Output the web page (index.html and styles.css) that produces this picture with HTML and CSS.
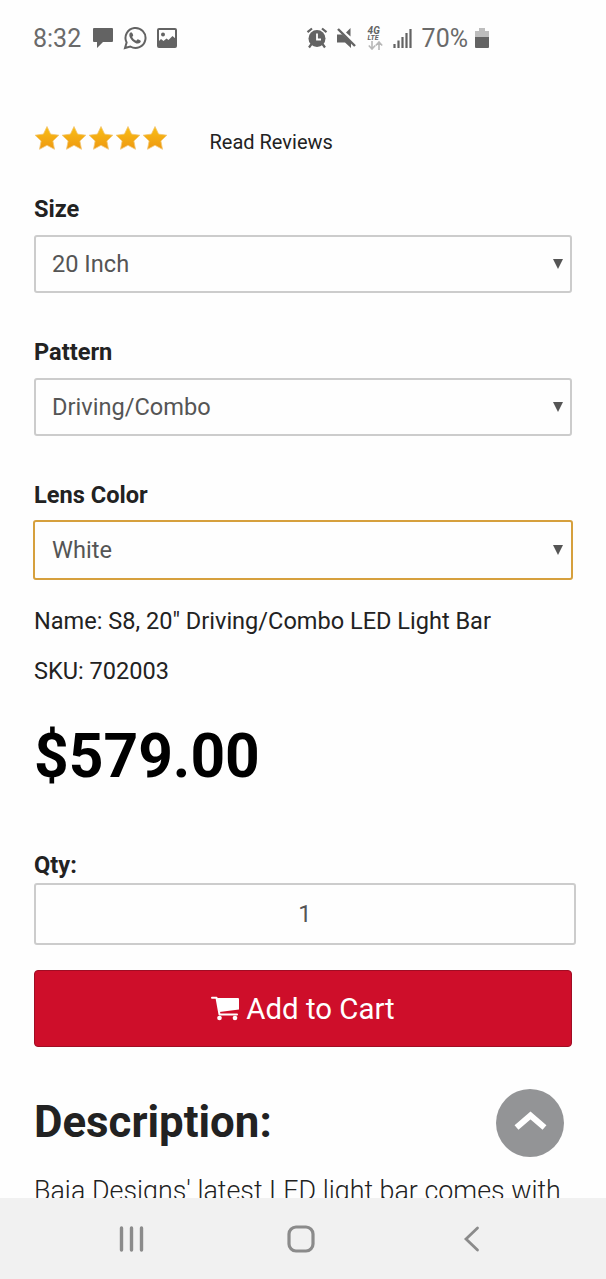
FILE: index.html
```html
<!DOCTYPE html>
<html lang="en">
<head>
    <meta charset="UTF-8">
    <meta name="viewport" content="width=device-width, initial-scale=1.0">
    <title>S8 LED Light Bar</title>
    <link rel="stylesheet" href="styles.css">
</head>
<body>

<header class="status-bar">
    <div class="status-group">
        <span class="status-text clock">8:32</span>
        <svg class="icon-message" width="22" height="22" viewBox="0 0 22 22"><path d="M2 1h18q1 0 1 1v12q0 1-1 1h-9l-6 6v-6H2q-1 0-1-1V2q0-1 1-1z" fill="#636363"/></svg>
        <svg class="icon-whatsapp" width="24" height="24" viewBox="0 0 24 24"><path d="M2 22l1.600-5.500A10 10 0 1 1 7.300 20.500z" fill="none" stroke="#636363" stroke-width="2"/><path d="M8.200 6.300c-.8 0-1.900 1.100-1.900 2.700 0 3.600 5 8.600 8.600 8.600 1.700 0 2.900-1.200 2.900-2.500 0-.5-2.500-1.800-3-1.800-.6 0-1.200 1.500-1.700 1.400-1.500-.4-3.400-2.200-3.900-3.600-.1-.5 1.100-1.100 1-1.800-.1-.6-1-3-2-3z" fill="#636363"/></svg>
        <svg class="icon-image" width="20" height="20" viewBox="0 0 20 20"><rect x="1" y="1" width="18" height="18" rx="1" fill="none" stroke="#636363" stroke-width="2"/><circle cx="6" cy="6.500" r="2" fill="#636363"/><path d="M1 14l3-3 2.500 2 3-2.500 2 1.500 4-4L19 11v8H1z" fill="#636363"/></svg>
    </div>
    <div class="status-group status-right">
        <svg width="22" height="22" viewBox="0 0 22 22"><circle cx="11" cy="11.500" r="8.500" fill="#636363"/><path d="M1.500 5.200L6 1.500M20.500 5.200L16 1.500M5.500 17L3 20.500M16.500 17L19 20.500" stroke="#636363" stroke-width="2.200" fill="none"/><path d="M11 6.500v6h4" stroke="#fff" stroke-width="1.800" fill="none"/></svg>
        <svg class="icon-mute" width="20" height="22" viewBox="0 0 20 22"><path d="M1 7.500h5L15 15v6l-6-5.500H1zM10 5.500L14.500 1v8.500z" fill="#636363"/><path d="M4.500 2.500l15 15" stroke="#fefefe" stroke-width="1.600"/><path d="M2 2l17 17" stroke="#636363" stroke-width="2.400"/></svg>
        <div class="network">
            <span class="network-gen">4G</span>
            <span class="network-lte">LTE</span>
            <svg width="15" height="9" viewBox="0 0 15 9"><path d="M4 0v8M.8 4.500L4 8l3.200-3.500M11 9V1M7.800 4.500L11 1l3.200 3.500" fill="none" stroke="#b8b8b8" stroke-width="1.600"/></svg>
        </div>
        <svg class="icon-signal" width="19" height="21" viewBox="0 0 19 21"><path d="M1.500 16v4M5.500 12.500V20M9.500 9v11M13.500 5v15M17.500 1v19" stroke="#636363" stroke-width="2.200" fill="none"/></svg>
        <span class="status-text">70%</span>
        <svg class="icon-battery" width="14" height="21" viewBox="0 0 14 21"><path d="M4 0h6v3h4v6H0V3h4z" fill="#bdbdbd"/><path d="M0 9h14v10q0 1-1 1H1q-1 0-1-1z" fill="#636363"/></svg>
    </div>
</header>

<main class="product">
    <div class="rating">
        <svg width="134" height="28" viewBox="0 0 134 28">
            <defs>
                <linearGradient id="gold" x1="0" y1="0" x2="0" y2="1">
                    <stop offset="0" stop-color="#f9bf16"/>
                    <stop offset="1" stop-color="#ee9810"/>
                </linearGradient>
                <path id="star" d="M13 1.500l3.600 7.600 8.300 1.100-6 5.800 1.600 8.300-7.500-4-7.500 4 1.600-8.300-6-5.800 8.300-1.100z" fill="url(#gold)" stroke="#f3c877" stroke-width=".8" stroke-linejoin="round"/>
            </defs>
            <use href="#star" x="0"/>
            <use href="#star" x="27"/>
            <use href="#star" x="54"/>
            <use href="#star" x="81"/>
            <use href="#star" x="108"/>
        </svg>
        <a class="reviews" href="#">Read Reviews</a>
    </div>

    <div class="field">
        <label for="size">Size</label>
        <div class="select-box">
            <select id="size"><option>20 Inch</option></select>
            <svg width="10" height="10" viewBox="0 0 10 10"><path d="M0 0h10L5 10z" fill="#555"/></svg>
        </div>
    </div>
    <div class="field">
        <label for="pattern">Pattern</label>
        <div class="select-box">
            <select id="pattern"><option>Driving/Combo</option></select>
            <svg width="10" height="10" viewBox="0 0 10 10"><path d="M0 0h10L5 10z" fill="#555"/></svg>
        </div>
    </div>
    <div class="field last">
        <label for="lens">Lens Color</label>
        <div class="select-box active">
            <select id="lens"><option>White</option></select>
            <svg width="10" height="10" viewBox="0 0 10 10"><path d="M0 0h10L5 10z" fill="#555"/></svg>
        </div>
    </div>

    <p class="info">Name: S8, 20" Driving/Combo LED Light Bar</p>
    <p class="info">SKU: 702003</p>
    <div class="price">$579.00</div>

    <label class="qty-label" for="qty">Qty:</label>
    <input class="qty" type="text" id="qty" value="1">

    <button class="add-to-cart">
        <svg width="28" height="25" viewBox="0 0 28 25"><path d="M1 1.800h4.500L8.500 18.500H26" fill="none" stroke="#fff" stroke-width="2" stroke-linecap="round" stroke-linejoin="round"/><path d="M5.500 2H27q1 0 1 1v10.500L8.500 16z" fill="#fff"/><circle cx="8.500" cy="22" r="2.300" fill="#fff"/><circle cx="24" cy="22" r="2.300" fill="#fff"/></svg>
        <span>Add to Cart</span>
    </button>

    <h2>Description:</h2>
    <p class="description">Baja Designs' latest LED light bar comes with</p>
</main>

<a class="to-top" href="#">
    <svg width="68" height="68" viewBox="0 0 68 68"><circle cx="34" cy="34" r="34" fill="#939496"/><path d="M20.500 38.500L34.500 26.500l14 12" fill="none" stroke="#fff" stroke-width="6"/></svg>
</a>

<nav class="nav-bar">
    <svg width="26" height="28" viewBox="0 0 26 28"><path d="M2.500 3v22M12.500 3v22M22.500 3v22" stroke="#8b8b8b" stroke-width="3.400" stroke-linecap="round"/></svg>
    <svg width="28" height="28" viewBox="0 0 28 28"><rect x="2" y="2" width="24" height="24" rx="7" fill="none" stroke="#8b8b8b" stroke-width="3.200"/></svg>
    <svg width="18" height="28" viewBox="0 0 18 28"><path d="M15.500 3L4 14l11.500 11" fill="none" stroke="#8b8b8b" stroke-width="2.800" stroke-linecap="round"/></svg>
</nav>

</body>
</html>
```
FILE: styles.css
```css
* {
    box-sizing: border-box;
}

body {
    font-family: Roboto, sans-serif;
    background-color: #fefefe;
    margin: 0;
    height: 1279px;
    color: #222;
    display: flex;
    flex-direction: column;
    overflow: hidden;
    position: relative;
}

svg {
    display: block;
    flex-shrink: 0;
}

.status-bar {
    height: 76px;
    flex-shrink: 0;
    padding: 0 117px 0 33px;
    display: flex;
    justify-content: space-between;
    align-items: center;
}

.status-group {
    display: flex;
    align-items: center;
    gap: 9px;
}

.status-right {
    gap: 8px;
}

.status-text {
    padding-top: 2px;
    font-size: 25px;
    line-height: 30px;
    color: #6a6a6a;
}

.clock {
    margin-right: 2px;
}

.icon-image {
    margin-left: 1px;
}

.icon-signal {
    margin: 0 2px 0 2px;
}

.icon-battery {
    margin-left: -1px;
}

.network {
    width: 15px;
    margin: 0 0 0 4px;
    display: flex;
    flex-direction: column;
    color: #636363;
    font-weight: bold;
    font-style: italic;
}

.network-gen {
    font-size: 10px;
    line-height: 8px;
}

.network-lte {
    font-size: 7px;
    line-height: 6px;
}

.product {
    height: 1122px;
    flex-shrink: 0;
    padding: 0 34px;
    overflow: hidden;
}

.rating {
    display: flex;
    gap: 41.500px;
    padding-top: 49px;
    height: 119px;
}

.reviews {
    font-size: 20px;
    line-height: 34px;
    color: #222;
    text-decoration: none;
}

.field {
    height: 143px;
}

.field.last {
    height: 125px;
}

.field label {
    display: block;
    font-size: 23.600px;
    font-weight: bold;
    line-height: 29px;
    margin-bottom: 11px;
}

.select-box {
    height: 58px;
    border: 2px solid #ccc;
    border-radius: 3px;
    padding: 0 7px 0 16px;
    display: flex;
    align-items: center;
}

.select-box.active {
    height: 60px;
    margin: -1px;
    padding: 0 8px 0 17px;
    border-color: #d6a03d;
}

.select-box select {
    flex: 1;
    appearance: none;
    border: none;
    outline: none;
    background: none;
    padding: 0;
    margin: 0;
    font-family: inherit;
    font-size: 23.600px;
    color: #555;
}

.info {
    margin: 0 0 20px;
    font-size: 23.550px;
    line-height: 30px;
    white-space: nowrap;
}

.price {
    height: 145px;
    padding-top: 15px;
    font-size: 60.500px;
    line-height: 72px;
    font-weight: bold;
    color: #000;
}

.qty-label {
    display: block;
    height: 32px;
    font-size: 23.600px;
    line-height: 28px;
    font-weight: bold;
}

.qty {
    display: block;
    width: 542px;
    height: 62px;
    border: 2px solid #ccc;
    border-radius: 3px;
    background: none;
    text-align: center;
    font-family: inherit;
    font-size: 23.600px;
    color: #555;
}

.add-to-cart {
    width: 100%;
    height: 77px;
    margin: 25px 0 43px;
    display: flex;
    justify-content: center;
    align-items: center;
    gap: 7px;
    background-color: #ce0e2a;
    border: 1px solid #a00d24;
    border-radius: 4px;
    color: white;
    font-family: inherit;
    font-size: 29.400px;
}

h2 {
    margin: 0 0 21px;
    font-size: 43.800px;
    line-height: 64px;
}

.description {
    margin: 0;
    font-size: 26.850px;
    line-height: 32px;
    font-weight: 300;
    white-space: nowrap;
}

.to-top {
    position: absolute;
    left: 496px;
    top: 1089px;
}

.nav-bar {
    height: 81px;
    flex-shrink: 0;
    padding: 0 126px 0 119px;
    display: grid;
    grid-template-columns: 168px 1fr auto;
    align-items: center;
    background-color: #f1f1f1;
}
```
